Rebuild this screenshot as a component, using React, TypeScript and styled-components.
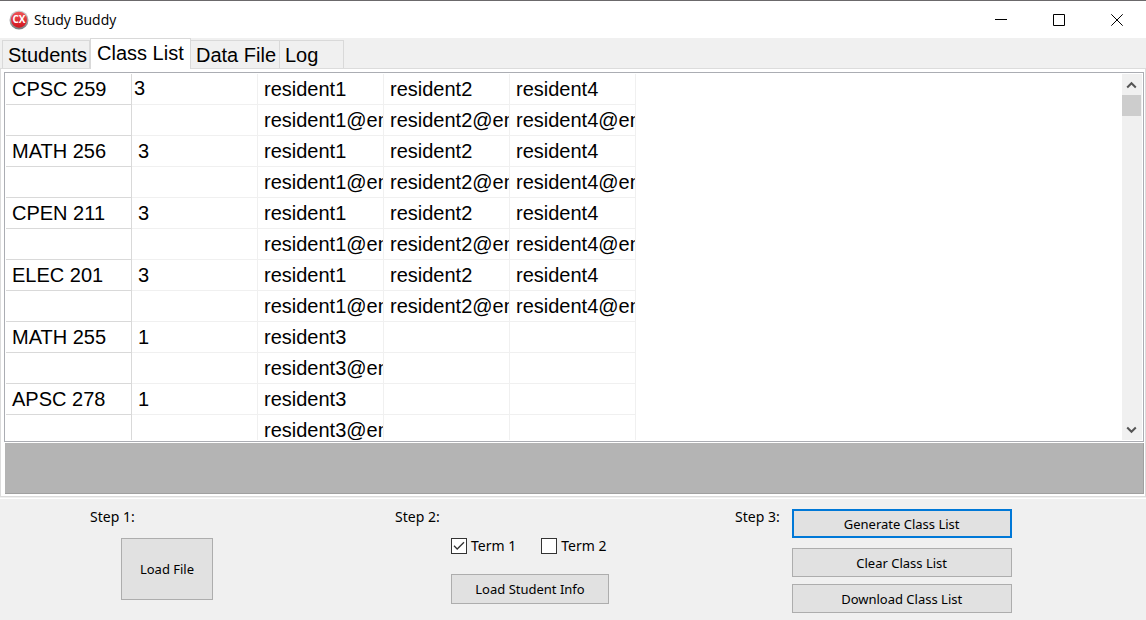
import React, { useState } from "react";
import styled, { createGlobalStyle } from "styled-components";

const uiFont = `"Noto Sans", "Open Sans", sans-serif`;
const gridFont = `"Liberation Sans", Arial, sans-serif`;

const GlobalStyle = createGlobalStyle`
  *, *::before, *::after { box-sizing: border-box; }
  body { margin: 0; background: #f0f0f0; color: #000; font: 13px/20px ${uiFont}; }
  button, input { font: inherit; color: inherit; margin: 0; }
`;

const Window = styled.div`
  display: flex;
  flex-direction: column;
  height: 100vh;
  min-height: 400px;
  border-top: 1px solid #6b696b;
  background: #f0f0f0;
`;

const TitleBar = styled.header`
  display: flex;
  align-items: center;
  flex: none;
  height: 37px;
  padding-left: 9px;
  background: #fff;
`;

const Title = styled.h1`
  flex: 1;
  margin: 0 0 0 5px;
  font: 400 14px/20px "Open Sans", ${uiFont};
`;

const CaptionButton = styled.button`
  display: grid;
  place-items: center;
  width: 58px;
  height: 37px;
  padding: 0;
  border: 0;
  background: none;
`;

const TabStrip = styled.div`
  display: flex;
  align-items: flex-end;
  flex: none;
  height: 30px;
  padding-left: 2px;
`;

const Tab = styled.button<{ $active?: boolean; $width: number }>`
  position: relative;
  width: ${(p) => p.$width}px;
  height: ${(p) => (p.$active ? 31 : 28)}px;
  margin-bottom: ${(p) => (p.$active ? -1 : 0)}px;
  padding: ${(p) => (p.$active ? "0 0 3px 6px" : "0 0 0 5px")};
  border: 1px solid #d9d9d9;
  border-bottom: 0;
  margin-left: ${(p) => (p.$active ? 0 : -1)}px;
  background: ${(p) => (p.$active ? "#fff" : "#f0f0f0")};
  font: 20px/24px ${gridFont};
  text-align: left;
  white-space: nowrap;
  &:first-child { margin-left: 0; }
`;

const Page = styled.main`
  display: flex;
  flex-direction: column;
  flex: 1;
  min-height: 0;
  padding: 3px 1px 2px 3px;
  border: 1px solid #dcdcdc;
  background: #fff;
`;

const GridFrame = styled.div`
  display: flex;
  flex: 1;
  min-height: 0;
  padding: 1px;
  border: 1px solid #abadb3;
`;

const GridView = styled.div`
  flex: 1;
  min-width: 0;
  overflow: hidden;
`;

const ClassTable = styled.table`
  width: 630px;
  table-layout: fixed;
  border-spacing: 0;
  font: 20px/30px ${gridFont};
`;

const Cell = styled.td<{ $editing?: boolean }>`
  height: 31px;
  padding: ${(p) => (p.$editing ? "0 0 1px 2px" : "0 0 0 6px")};
  border-right: 1px solid #f0f0f0;
  border-bottom: 1px solid #f0f0f0;
  line-height: ${(p) => (p.$editing ? 29 : 30)}px;
  overflow: hidden;
  white-space: nowrap;
`;

const HeadCell = styled(Cell).attrs({ as: "th", scope: "row" })`
  border-color: #d9d9d9;
  font-weight: 400;
  text-align: left;
`;

const ScrollBar = styled.div`
  display: flex;
  flex-direction: column;
  flex: none;
  width: 20px;
  background: #f0f0f0;
`;

const ScrollArrow = styled.button`
  display: grid;
  place-items: center;
  width: 19px;
  height: 21px;
  padding: 0;
  border: 0;
  background: none;
`;

const ScrollTrack = styled.div`
  flex: 1;
`;

const ScrollThumb = styled.div`
  width: 19px;
  height: 21px;
  background: #cdcdcd;
`;

const StatusPanel = styled.div`
  flex: none;
  height: 51px;
  margin: 1px 0 0 1px;
  border-right: 1px solid #a0a0a0;
  border-bottom: 1px solid #a0a0a0;
  background: #b4b4b4;
`;

const Controls = styled.section`
  display: grid;
  grid-template-columns: 305fr 340fr 411fr;
  flex: none;
  min-height: 122px;
  margin-top: 1px;
  padding: 10px 0 6px 90px;
  border-top: 1px solid #fff;
`;

const Step = styled.div<{ $gap: number }>`
  display: grid;
  grid-template-columns: auto 1fr;
  align-content: start;
  column-gap: ${(p) => p.$gap}px;
`;

const StepLabel = styled.h2`
  margin: 0;
  font: 400 14px/16px ${uiFont};
`;

const StepBody = styled.div<{ $top: number; $indent: number }>`
  grid-column: 1 / -1;
  padding: ${(p) => p.$top}px 0 0 ${(p) => p.$indent}px;
`;

const PushButton = styled.button<{ $width: number; $height: number; $primary?: boolean }>`
  display: block;
  width: ${(p) => p.$width}px;
  height: ${(p) => p.$height}px;
  padding: 0;
  border: ${(p) => (p.$primary ? "2px solid #0078d7" : "1px solid #adadad")};
  background: #e1e1e1;
  line-height: 16px;
`;

const ButtonStack = styled.div`
  display: grid;
  row-gap: 7px;
  & > :first-child { margin-bottom: 3px; }
`;

const CheckRow = styled.div`
  display: flex;
  gap: 25px;
  margin-bottom: 19px;
`;

const CheckLabel = styled.label`
  display: flex;
  align-items: center;
  gap: 4px;
  font-size: 14px;
  line-height: 18px;
`;

const CheckWrap = styled.span`
  display: grid;
  place-items: center;
  & > * { grid-area: 1 / 1; }
  & svg { pointer-events: none; }
`;

const CheckBox = styled.input`
  appearance: none;
  width: 16px;
  height: 16px;
  border: 1px solid #333;
  background: #fff;
`;

function AppLogo() {
  return (
    <svg width="20" height="20" viewBox="0 0 20 20" aria-hidden="true">
      <defs>
        <linearGradient id="ring" x1="0" y1="0" x2="0" y2="1">
          <stop offset="0" stopColor="#d2d2d4" />
          <stop offset="1" stopColor="#77787c" />
        </linearGradient>
        <linearGradient id="ball" x1="0" y1="0" x2="0" y2="1">
          <stop offset="0" stopColor="#ef5356" />
          <stop offset="1" stopColor="#d3141f" />
        </linearGradient>
      </defs>
      <circle cx="10" cy="10" r="9.5" fill="url(#ring)" />
      <circle cx="10" cy="9.7" r="8" fill="url(#ball)" />
      <text x="10" y="13" textAnchor="middle" fontFamily="Open Sans, sans-serif" fontWeight="700" fontSize="10" fill="#fff">CX</text>
    </svg>
  );
}

function Arrow({ down }: { down?: boolean }) {
  return (
    <svg width="11" height="8" viewBox="0 0 11 8" fill="none" stroke="#555" strokeWidth="2" aria-hidden="true">
      <path d={down ? "M1.2 1.5 5.5 5.8 9.8 1.5" : "M1.2 6.5 5.5 2.2 9.8 6.5"} />
    </svg>
  );
}

const classes = [
  { name: "CPSC 259", residents: ["resident1", "resident2", "resident4"] },
  { name: "MATH 256", residents: ["resident1", "resident2", "resident4"] },
  { name: "CPEN 211", residents: ["resident1", "resident2", "resident4"] },
  { name: "ELEC 201", residents: ["resident1", "resident2", "resident4"] },
  { name: "MATH 255", residents: ["resident3"] },
  { name: "APSC 278", residents: ["resident3"] },
];

const tabs = [
  { name: "Students", width: 88 },
  { name: "Class List", width: 101 },
  { name: "Data File", width: 90 },
  { name: "Log", width: 65 },
];

const slots = [0, 1, 2];

function Term({ label, initial }: { label: string; initial: boolean }) {
  const [on, setOn] = useState(initial);
  return (
    <CheckLabel>
      <CheckWrap>
        <CheckBox type="checkbox" checked={on} onChange={() => setOn(!on)} />
        {on && (
          <svg width="12" height="10" viewBox="0 0 12 10" fill="none" stroke="#333" strokeWidth="1.3" aria-hidden="true">
            <path d="M1 4.8 4.2 8 11 1.2" />
          </svg>
        )}
      </CheckWrap>
      {label}
    </CheckLabel>
  );
}

export default function App() {
  const [active, setActive] = useState("Class List");
  return (
    <>
      <GlobalStyle />
      <Window>
        <TitleBar>
          <AppLogo />
          <Title>Study Buddy</Title>
          <CaptionButton aria-label="Minimize">
            <svg width="12" height="12" stroke="#000"><path d="M0 5.5H12" /></svg>
          </CaptionButton>
          <CaptionButton aria-label="Maximize">
            <svg width="12" height="12" stroke="#000" fill="none"><path d="M.5.5h11v11H.5z" /></svg>
          </CaptionButton>
          <CaptionButton aria-label="Close">
            <svg width="12" height="12" stroke="#000"><path d="M.3.3 11.7 11.7M11.7.3.3 11.7" /></svg>
          </CaptionButton>
        </TitleBar>

        <TabStrip role="tablist">
          {tabs.map((t) => (
            <Tab
              key={t.name}
              role="tab"
              aria-selected={active === t.name}
              $active={active === t.name}
              $width={t.width}
              onClick={() => setActive(t.name)}
            >
              {t.name}
            </Tab>
          ))}
        </TabStrip>

        <Page>
          <GridFrame>
            <GridView>
              <ClassTable>
                <tbody>
                  {classes.map((c, i) => (
                    <React.Fragment key={c.name}>
                      <tr>
                        <HeadCell>{c.name}</HeadCell>
                        <Cell $editing={i === 0}>{c.residents.length}</Cell>
                        {slots.map((s) => <Cell key={s}>{c.residents[s]}</Cell>)}
                      </tr>
                      <tr>
                        <HeadCell />
                        <Cell />
                        {slots.map((s) => (
                          <Cell key={s}>{c.residents[s] && `${c.residents[s]}@en`}</Cell>
                        ))}
                      </tr>
                    </React.Fragment>
                  ))}
                </tbody>
              </ClassTable>
            </GridView>
            <ScrollBar>
              <ScrollArrow aria-label="Scroll up"><Arrow /></ScrollArrow>
              <ScrollTrack><ScrollThumb /></ScrollTrack>
              <ScrollArrow aria-label="Scroll down"><Arrow down /></ScrollArrow>
            </ScrollBar>
          </GridFrame>
          <StatusPanel />
        </Page>

        <Controls>
          <Step $gap={0}>
            <StepLabel>Step 1:</StepLabel>
            <StepBody $top={13} $indent={31}>
              <PushButton $width={92} $height={62}>Load File</PushButton>
            </StepBody>
          </Step>
          <Step $gap={0}>
            <StepLabel>Step 2:</StepLabel>
            <StepBody $top={12} $indent={56}>
              <CheckRow>
                <Term label="Term 1" initial />
                <Term label="Term 2" initial={false} />
              </CheckRow>
              <PushButton $width={158} $height={30}>Load Student Info</PushButton>
            </StepBody>
          </Step>
          <Step $gap={12}>
            <StepLabel>Step 3:</StepLabel>
            <ButtonStack>
              <PushButton $width={220} $height={29} $primary>Generate Class List</PushButton>
              <PushButton $width={220} $height={29}>Clear Class List</PushButton>
              <PushButton $width={220} $height={29}>Download Class List</PushButton>
            </ButtonStack>
          </Step>
        </Controls>
      </Window>
    </>
  );
}
